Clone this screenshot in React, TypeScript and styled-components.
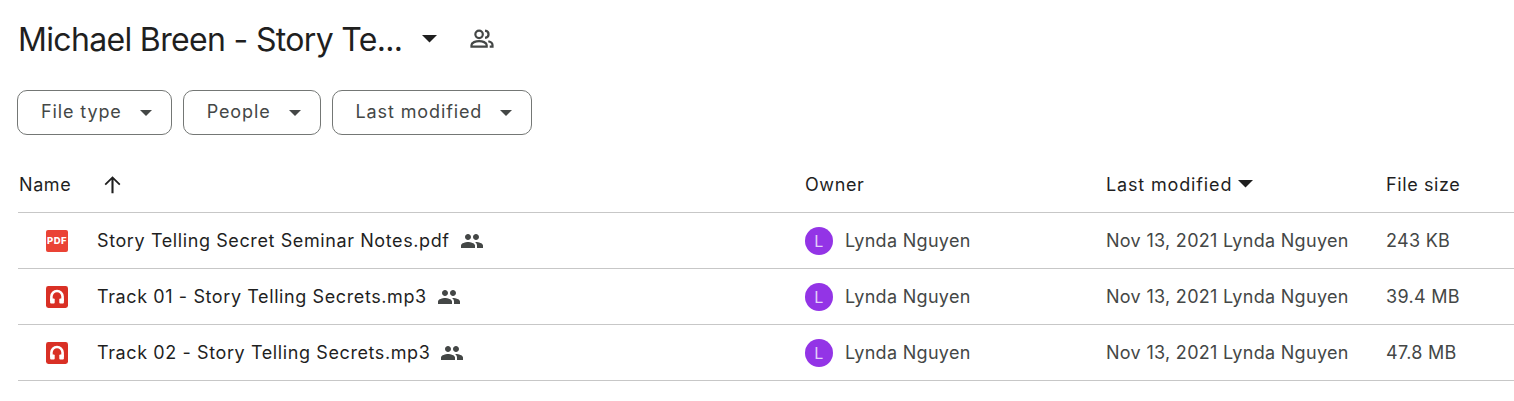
import React from 'react';
import styled, { createGlobalStyle } from 'styled-components';

const files = [
  { name: 'Story Telling Secret Seminar Notes.pdf', kind: 'pdf', size: '243 KB' },
  { name: 'Track 01 - Story Telling Secrets.mp3', kind: 'audio', size: '39.4 MB' },
  { name: 'Track 02 - Story Telling Secrets.mp3', kind: 'audio', size: '47.8 MB' },
];

const filters = ['File type', 'People', 'Last modified'];

const Caret = ({ size = 10 }: { size?: number }) => (
  <svg width={size} height={size / 2} viewBox="0 0 10 5"><path d="M0 0h10L5 5z" fill="currentColor" /></svg>
);

const SharedIcon = () => (
  <svg width="24" height="24" viewBox="0 0 24 24" fill="#444746">
    <path d="M16 11c1.66 0 2.99-1.34 2.99-3S17.66 5 16 5s-3 1.34-3 3 1.34 3 3 3zm-8 0c1.66 0 2.99-1.34 2.99-3S9.66 5 8 5 5 6.34 5 8s1.34 3 3 3zm0 2c-2.33 0-7 1.17-7 3.5V19h14v-2.5C15 14.17 10.33 13 8 13zm8 0c-.29 0-.62.02-.97.05 1.16.84 1.97 1.97 1.97 3.45V19h6v-2.5c0-2.33-4.67-3.5-7-3.5z" />
  </svg>
);

const OutlinePeople = () => (
  <svg width="28" height="28" viewBox="0 0 24 24" fill="none" stroke="#444746" strokeWidth="1.9">
    <circle cx="9.5" cy="8" r="3.2" />
    <path d="M3 18.6v-1.4c0-2.2 3.6-3.4 6.5-3.4s6.5 1.2 6.5 3.4v1.4z" />
    <path d="M14.6 4.9c1.8.2 3 1.5 3 3.1s-1.2 2.9-3 3.1" />
    <path d="M17.4 13.9c2 .5 3.6 1.6 3.6 3.3v1.4h-2.4" />
  </svg>
);

const AudioIcon = () => (
  <svg width="22" height="22" viewBox="0 0 22 22">
    <rect width="22" height="22" rx="2.4" fill="#d93025" />
    <path d="M5.4 15v-4.4a5.6 5.6 0 0 1 11.2 0V15" fill="none" stroke="#fff" strokeWidth="2.6" />
    <rect x="4.1" y="12.4" width="4.6" height="5.2" rx="1" fill="#fff" />
    <rect x="13.3" y="12.4" width="4.6" height="5.2" rx="1" fill="#fff" />
  </svg>
);

const App = () => (
  <Page>
    <GlobalStyle />
    <TitleRow>
      <Title>Michael Breen - Story Te...</Title>
      <TitleCaret><Caret size={15} /></TitleCaret>
      <OutlinePeople />
    </TitleRow>
    <FilterRow>
      {filters.map((label) => (
        <FilterChip key={label}>
          {label}
          <Caret size={12} />
        </FilterChip>
      ))}
    </FilterRow>
    <HeaderRow>
      <NameHead>
        Name
        <svg width="25" height="25" viewBox="0 0 24 24" fill="#1f1f1f">
          <path d="M11 20.5V7.4l-5.4 5.4L4.4 11.6 12 4l7.6 7.6-1.2 1.2L13 7.4v13.1z" />
        </svg>
      </NameHead>
      <span>Owner</span>
      <ModifiedHead>Last modified <Caret size={15} /></ModifiedHead>
      <span>File size</span>
    </HeaderRow>
    {files.map((file) => (
      <FileRow key={file.name}>
        <NameCell>
          <IconSlot>
            {file.kind === 'pdf' ? <PdfBadge>PDF</PdfBadge> : <AudioIcon />}
          </IconSlot>
          <FileName>{file.name}</FileName>
          <SharedIcon />
        </NameCell>
        <OwnerCell>
          <Avatar>L</Avatar>
          Lynda Nguyen
        </OwnerCell>
        <span>Nov 13, 2021 Lynda Nguyen</span>
        <span>{file.size}</span>
      </FileRow>
    ))}
  </Page>
);

export default App;

const GlobalStyle = createGlobalStyle`
  body {
    margin: 0;
    background: #fff;
    font-family: Inter, Roboto, sans-serif;
  }
`;

const Page = styled.div`
  width: 1514px;
  height: 401px;
  padding-left: 18px;
  box-sizing: border-box;
  overflow: hidden;
`;

const TitleRow = styled.div`
  display: flex;
  align-items: center;
  height: 40px;
  padding-top: 19px;
  color: #1f1f1f;
`;

const Title = styled.h1`
  margin: 0;
  width: 386px;
  font-size: 32px;
  font-weight: 400;
  letter-spacing: -0.67px;
  white-space: nowrap;
`;

const TitleCaret = styled.span`
  display: flex;
  margin: 0 31px 0 18px;
`;

const FilterRow = styled.div`
  display: flex;
  gap: 11px;
  margin: 31px 0 0 -1px;
`;

const FilterChip = styled.div`
  display: flex;
  align-items: center;
  gap: 18px;
  height: 45px;
  padding: 0 19px 2px 23px;
  border: 1px solid #747775;
  border-radius: 10px;
  color: #444746;
  font-size: 18px;
  letter-spacing: 0.88px;
  box-sizing: border-box;

  svg {
    margin-top: 2px;
  }
`;

const columns = `
  display: grid;
  grid-template-columns: 787px 301px 280px 1fr;
  align-items: center;
`;

const HeaderRow = styled.div`
  ${columns}
  height: 77px;
  margin-top: 1px;
  padding-top: 20px;
  border-bottom: 1px solid #c7c7c7;
  box-sizing: border-box;
  color: #1f1f1f;
  font-size: 18px;
  letter-spacing: 0.6px;
`;

const NameHead = styled.div`
  display: flex;
  align-items: center;
  gap: 29px;
  padding-left: 1px;
`;

const ModifiedHead = styled.div`
  display: flex;
  align-items: center;
  gap: 6px;
  letter-spacing: 0.85px;
`;

const FileRow = styled.div`
  ${columns}
  height: 56px;
  border-bottom: 1px solid #c7c7c7;
  box-sizing: border-box;
  color: #444746;
  font-size: 18px;
  letter-spacing: 0.3px;
`;

const NameCell = styled.div`
  display: flex;
  align-items: center;
  gap: 10px;
`;

const IconSlot = styled.div`
  display: flex;
  width: 22px;
  margin-left: 28px;
  margin-right: 19px;
`;

const PdfBadge = styled.div`
  display: flex;
  align-items: center;
  justify-content: center;
  width: 22px;
  height: 22px;
  border-radius: 2px;
  background: #ea4335;
  color: #fff;
  font-size: 9.5px;
  font-weight: 800;
  letter-spacing: 0.5px;
`;

const FileName = styled.span`
  color: #1f1f1f;
  letter-spacing: 0.6px;
`;

const OwnerCell = styled.div`
  display: flex;
  align-items: center;
  gap: 12px;
`;

const Avatar = styled.div`
  display: flex;
  align-items: center;
  justify-content: center;
  width: 28px;
  height: 28px;
  border-radius: 50%;
  background: #9334e6;
  color: #e3d0fa;
  font-size: 16px;
`;
